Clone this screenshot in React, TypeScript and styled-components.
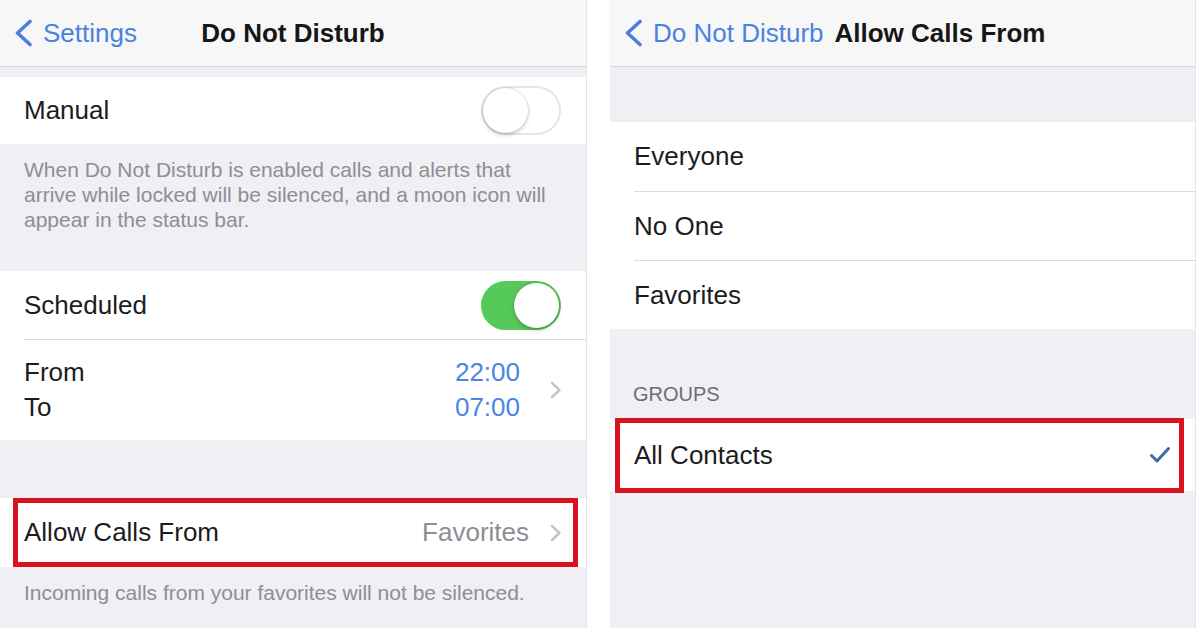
import { FC, ReactNode } from 'react'
import styled, { createGlobalStyle } from 'styled-components'

const GlobalStyle = createGlobalStyle`
  html, body {
    margin: 0;
    padding: 0;
    background: #ffffff;
  }
  body {
    font-family: 'Liberation Sans', Arial, Helvetica, sans-serif;
    -webkit-font-smoothing: antialiased;
  }
  * {
    box-sizing: border-box;
  }
`

const Page = styled.div`
  width: 1196px;
  height: 628px;
  display: flex;
  gap: 23px;
  overflow: hidden;
  background: #ffffff;
`

const Panel = styled.div<{ $width: number }>`
  width: ${({ $width }) => $width}px;
  height: 628px;
  flex-shrink: 0;
  display: flex;
  flex-direction: column;
  background: #efeff4;
  border-right: 1px solid #e4e4e8;
  overflow: hidden;
`

const NavBar = styled.div`
  height: 67px;
  flex-shrink: 0;
  display: grid;
  grid-template-columns: 1fr auto 1fr;
  column-gap: 11px;
  align-items: center;
  padding: 0 13px;
  background: #f7f7f8;
  border-bottom: 1px solid #d6d6da;
`

const BackButton = styled.div`
  display: flex;
  align-items: center;
  gap: 10px;
  color: #4a82e0;
  font-size: 26px;
  white-space: nowrap;
`

const NavTitle = styled.div`
  font-size: 26px;
  font-weight: 700;
  color: #161616;
  white-space: nowrap;
`

const Spacer = styled.div<{ $h: number }>`
  height: ${({ $h }) => $h}px;
  flex-shrink: 0;
`

const Group = styled.div`
  position: relative;
  background: #ffffff;
  flex-shrink: 0;
`

const Row = styled.div<{ $h?: number }>`
  height: ${({ $h }) => $h ?? 68}px;
  margin-left: 24px;
  padding-right: 24px;
  display: flex;
  align-items: center;
  justify-content: space-between;
  font-size: 26px;
  color: #1c1c1e;
  & + & {
    border-top: 1px solid #dcdce0;
  }
`

const StackedLabels = styled.div`
  display: flex;
  flex-direction: column;
  line-height: 35px;
`

const Trailing = styled.div`
  display: flex;
  align-items: center;
`

const Times = styled.div`
  display: flex;
  flex-direction: column;
  align-items: flex-end;
  line-height: 35px;
  color: #4a86e4;
  margin-right: 30px;
`

const Value = styled.span`
  color: #8e8e93;
  margin-right: 21px;
`

const Note = styled.div<{ $h?: number }>`
  height: ${({ $h }) => ($h ? `${$h}px` : 'auto')};
  flex-shrink: 0;
  padding: 13px 24px 0;
  font-size: 21px;
  line-height: 25px;
  color: #8e8e93;
`

const SectionHeader = styled.div`
  height: 90px;
  flex-shrink: 0;
  padding: 55px 23px 0;
`

const HeaderText = styled.div`
  font-size: 20px;
  line-height: 20px;
  color: #6d6d72;
  text-transform: uppercase;
`

const Track = styled.div<{ $on: boolean }>`
  width: 80px;
  height: 49px;
  border-radius: 25px;
  padding: 2px;
  display: flex;
  justify-content: ${({ $on }) => ($on ? 'flex-end' : 'flex-start')};
  background: ${({ $on }) => ($on ? '#56c95b' : '#ffffff')};
  box-shadow: ${({ $on }) => ($on ? 'none' : 'inset 0 0 0 2px #e6e6ea')};
  margin-right: 1px;
`

const Knob = styled.div`
  width: 45px;
  height: 45px;
  border-radius: 50%;
  background: #ffffff;
  box-shadow: 0 2px 4px rgba(0, 0, 0, 0.22), 0 0 0 1px rgba(0, 0, 0, 0.06);
`

const Highlight = styled.div<{ $left: number; $right: number; $top: number; $bottom: number }>`
  position: absolute;
  left: ${({ $left }) => $left}px;
  right: ${({ $right }) => $right}px;
  top: ${({ $top }) => $top}px;
  bottom: ${({ $bottom }) => $bottom}px;
  border: 5px solid #d8131f;
  pointer-events: none;
`

const BackChevron = () => (
  <svg width="20" height="28" viewBox="0 0 20 28" fill="none">
    <path
      d="M17 2.5 L4.5 14 L17 25.5"
      stroke="#4a7fde"
      strokeWidth="3.6"
      strokeLinecap="round"
      strokeLinejoin="round"
    />
  </svg>
)

const Disclosure = () => (
  <svg width="12" height="18" viewBox="0 0 12 18" fill="none">
    <path
      d="M2 2 L9.5 9 L2 16"
      stroke="#c4c4c9"
      strokeWidth="2.4"
      strokeLinecap="round"
      strokeLinejoin="round"
    />
  </svg>
)

const Checkmark = () => (
  <svg width="22" height="18" viewBox="0 0 22 18" fill="none">
    <path
      d="M2.5 9.5 L8 15 L19.5 2.5"
      stroke="#4069b0"
      strokeWidth="3"
      strokeLinecap="round"
      strokeLinejoin="round"
    />
  </svg>
)

const Switch: FC<{ on: boolean }> = ({ on }) => (
  <Track $on={on}>
    <Knob />
  </Track>
)

const Nav: FC<{ back: string; title: string }> = ({ back, title }) => (
  <NavBar>
    <BackButton>
      <BackChevron />
      {back}
    </BackButton>
    <NavTitle>{title}</NavTitle>
    <span />
  </NavBar>
)

const Chevroned: FC<{ children: ReactNode }> = ({ children }) => (
  <Trailing>
    {children}
    <Disclosure />
  </Trailing>
)

const DoNotDisturb = () => (
  <Panel $width={587}>
    <Nav back="Settings" title="Do Not Disturb" />
    <Spacer $h={10} />
    <Group>
      <Row $h={67}>
        Manual
        <Switch on={false} />
      </Row>
    </Group>
    <Note $h={127}>
      When Do Not Disturb is enabled calls and alerts that arrive while locked will be
      silenced, and a moon icon will appear in the status bar.
    </Note>
    <Group>
      <Row $h={68}>
        Scheduled
        <Switch on />
      </Row>
      <Row $h={101}>
        <StackedLabels>
          <span>From</span>
          <span>To</span>
        </StackedLabels>
        <Chevroned>
          <Times>
            <span>22:00</span>
            <span>07:00</span>
          </Times>
        </Chevroned>
      </Row>
    </Group>
    <Spacer $h={58} />
    <Group>
      <Row $h={69}>
        Allow Calls From
        <Chevroned>
          <Value>Favorites</Value>
        </Chevroned>
      </Row>
      <Highlight $left={13} $right={8} $top={0} $bottom={0} />
    </Group>
    <Note>Incoming calls from your favorites will not be silenced.</Note>
  </Panel>
)

const AllowCallsFrom = () => (
  <Panel $width={586}>
    <Nav back="Do Not Disturb" title="Allow Calls From" />
    <Spacer $h={55} />
    <Group>
      <Row $h={69}>Everyone</Row>
      <Row $h={69}>No One</Row>
      <Row $h={69}>Favorites</Row>
    </Group>
    <SectionHeader>
      <HeaderText>Groups</HeaderText>
    </SectionHeader>
    <Group>
      <Row $h={72}>
        All Contacts
        <Checkmark />
      </Row>
      <Highlight $left={5} $right={11} $top={-1} $bottom={-2} />
    </Group>
  </Panel>
)

const App = () => (
  <>
    <GlobalStyle />
    <Page>
      <DoNotDisturb />
      <AllowCallsFrom />
    </Page>
  </>
)

export default App
